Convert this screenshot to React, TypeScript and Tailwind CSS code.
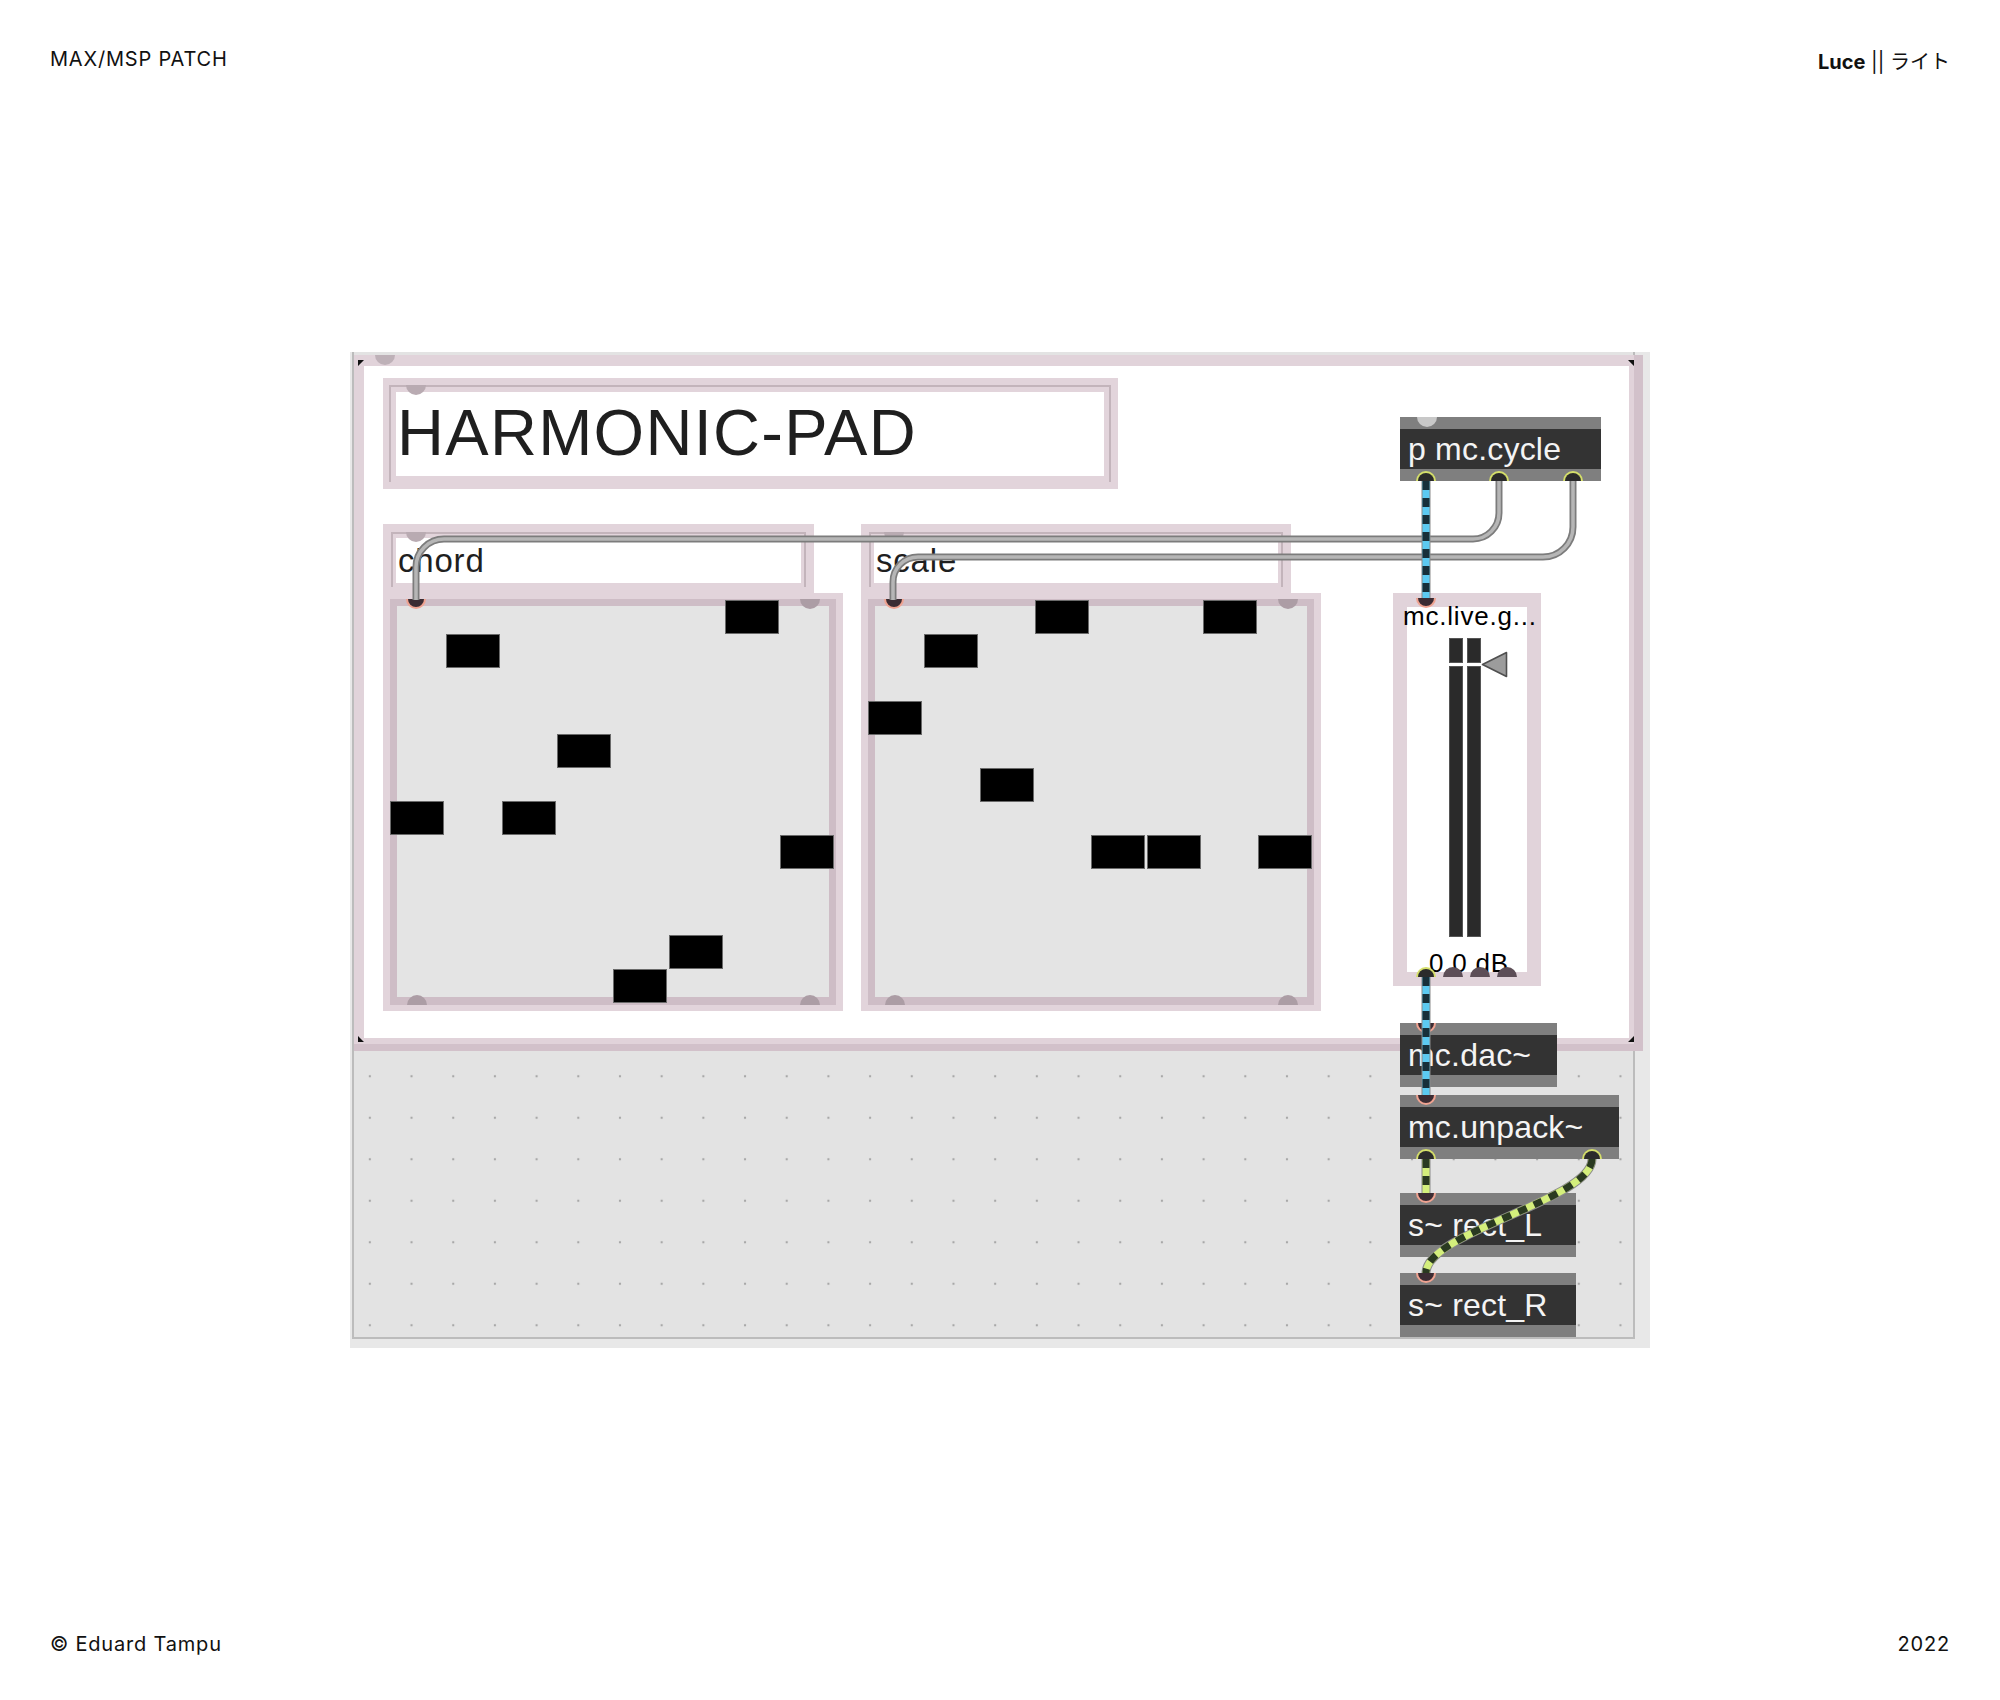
import type { CSSProperties } from "react";

type Side = "in" | "out";
type Tone = "hot" | "live" | "grey" | "mauve" | "dusk";

const SIDE: Record<Side, string> = {
  in: "top-0 rounded-b-full border-t-0",
  out: "bottom-0 rounded-t-full border-b-0",
};
const TONE: Record<Tone, string> = {
  hot: "border-2 border-[#f0a391] bg-[#3b2c33]",
  live: "border-2 border-[#d5df6a] bg-[#2b2b2b]",
  grey: "bg-[#c8c8c8]",
  mauve: "bg-[#ac9da5]",
  dusk: "bg-[#5d4e57]",
};

// inlet / outlet nub, sits over the edge of its object
function Port({ x, side, tone, style }: { x: number; side: Side; tone: Tone; style?: CSSProperties }) {
  return <span className={`absolute h-[10px] w-[20px] ${SIDE[side]} ${TONE[tone]}`} style={{ left: x - 10, ...style }} />;
}

// dark max object box: grey strip / body / grey strip
function Box({ pos, label, ins, outs }: { pos: string; label: string; ins: [number, Tone][]; outs: [number, Tone][] }) {
  return (
    <div className={`absolute flex h-[64px] flex-col ${pos}`}>
      <div className="h-[12px] bg-[#7f7f7f]" />
      <div className="flex h-[40px] items-center whitespace-nowrap bg-[#333333] pl-[8px] text-[32px] leading-none tracking-[0.2px] text-[#f4f4f4]">{label}</div>
      <div className="h-[12px] bg-[#7f7f7f]" />
      {ins.map(([x, t]) => <Port key={`i${x}`} x={x} side="in" tone={t} />)}
      {outs.map(([x, t]) => <Port key={`o${x}`} x={x} side="out" tone={t} />)}
    </div>
  );
}

// comment box with the pink selection frame
function Comment({ pos, label, size }: { pos: string; label: string; size: "big" | "small" }) {
  const big = size === "big";
  return (
    <div className={`absolute bg-[#e2d4db] ${pos} ${big ? "px-[7px] pb-[7px] pl-[6px] pt-[7px]" : "pb-[8px] pl-[8px] pr-[8px] pt-[8px]"}`}>
      <div className={`border-2 border-b-0 border-[#c3b4bb] ${big ? "px-[5px] pb-[6px] pt-[5px]" : "px-[3px] pb-[4px] pt-[4px]"}`}>
        <div className={`whitespace-nowrap bg-white leading-none ${big ? "h-[84px] pl-[1px] pt-[8px] text-[65px] tracking-[1.3px]" : "h-[45px] pl-[2px] pt-[6px] text-[33px]"}`}>
          {label}
        </div>
      </div>
      <span className={`absolute left-[23px] h-[10px] w-[20px] rounded-b-full bg-[#b9abb2] ${big ? "top-[7px]" : "top-[8px]"}`} />
    </div>
  );
}

function Matrix({ pos, cells }: { pos: string; cells: [number, number][] }) {
  return (
    <div className={`absolute h-[418px] w-[460px] bg-[#e2d4db] pl-[7px] pt-[6px] ${pos}`}>
      <div className="relative grid h-[406px] w-[446px] grid-cols-[repeat(8,55.75px)] grid-rows-[repeat(12,33.5px)] content-start bg-[#e4e4e4] pt-px shadow-[inset_0_0_0_7px_#cebdc6,inset_0_-8px_0_0_#cebdc6]">
        {cells.map(([c, r]) => (
          <div
            key={`${c}-${r}`}
            className="h-[34px] w-[54px] border border-[#6a6a6a] bg-black"
            style={{ gridColumnStart: c + 1, gridRowStart: r + 1 }}
          />
        ))}
        <Port x={26} side="in" tone="hot" />
        <Port x={420} side="in" tone="mauve" />
        <Port x={27} side="out" tone="mauve" />
        <Port x={420} side="out" tone="mauve" />
      </div>
    </div>
  );
}

function Cable({ d, kind }: { d: string; kind: "mc" | "sig" | "msg" }) {
  if (kind === "msg")
    return (
      <g fill="none">
        <path d={d} stroke="#7c7c7c" strokeWidth={7} />
        <path d={d} stroke="#b6b6b6" strokeWidth={3.5} />
      </g>
    );
  const hi = kind === "mc" ? "#5ccaf1" : "#d4ef7c";
  const lo = kind === "mc" ? "#17303a" : "#2a3a21";
  return (
    <g fill="none">
      <path d={d} stroke="#8a8a8a" strokeWidth={9} />
      <path d={d} stroke={hi} strokeWidth={7} />
      <path d={d} stroke={lo} strokeWidth={7} strokeDasharray="9 8" />
    </g>
  );
}

function Meter() {
  return (
    <div className="flex flex-col gap-[3px]">
      <div className="flex gap-[4px]">
        <div className="h-[25px] w-[14px] border border-[#555] bg-[#2a2a2a]" />
        <div className="h-[25px] w-[14px] border border-[#555] bg-[#2a2a2a]" />
      </div>
      <div className="flex gap-[4px]">
        <div className="h-[271px] w-[14px] border border-[#555] bg-[#2a2a2a]" />
        <div className="h-[271px] w-[14px] border border-[#555] bg-[#2a2a2a]" />
      </div>
    </div>
  );
}

function Gain() {
  return (
    <div className="absolute left-[1043px] top-[241px] h-[393px] w-[148px] bg-[#e1d3da] p-[14px]">
      <div className="flex h-[365px] flex-col bg-white text-[26px] leading-none text-black">
        <span className="-ml-[4px] -mt-[4px] whitespace-nowrap">mc.live.g...</span>
        <div className="mt-[9px] flex items-start pl-[42px]">
          <Meter />
          <svg className="mt-[12px]" width="28" height="30" viewBox="0 0 28 30">
            <path d="M1.5 14.5 L25.5 2.5 V26.5 Z" fill="#9c9c9c" stroke="#4f4f4f" strokeWidth="1.6" strokeLinejoin="round" />
          </svg>
        </div>
        <span className="mt-[13px] whitespace-nowrap pl-[22px]">0.0 dB</span>
      </div>
      <Port x={33} side="in" tone="hot" style={{ top: 5 }} />
      <Port x={33} side="out" tone="live" style={{ bottom: 9 }} />
      <Port x={60} side="out" tone="dusk" style={{ bottom: 9 }} />
      <Port x={87} side="out" tone="dusk" style={{ bottom: 9 }} />
      <Port x={114} side="out" tone="dusk" style={{ bottom: 9 }} />
    </div>
  );
}

function Patch() {
  return (
    <div className="relative h-[996px] w-[1300px] bg-[#e8e8e8] font-['Liberation_Sans',Arial,sans-serif] text-[#1f1f1f]">
      {/* patcher canvas with its dot grid */}
      <div className="absolute left-[2px] top-0 h-[987px] w-[1283px] border-2 border-t-0 border-[#bcbcbc] bg-[#e3e3e3] bg-[radial-gradient(circle,#a8a8a8_1px,transparent_1.6px)] bg-[length:41.7px_41.5px] bg-[position:-5px_-2px]" />

      {/* presentation panel */}
      <div className="absolute left-[4px] top-[3px] h-[696px] w-[1289px] bg-[#d2c1ca]">
        <div className="h-[689px] w-[1280px] bg-[#e1d3da] pb-[6px] pl-[10px] pr-[5px] pt-[11px]">
          <div className="h-[672px] w-[1265px] bg-white" />
        </div>
        <span className="absolute left-[21px] top-0 h-[10px] w-[20px] rounded-b-full bg-[#beb1b8]" />
      </div>

      <Comment pos="left-[33px] top-[26px] w-[735px]" label="HARMONIC-PAD" size="big" />
      <Comment pos="left-[33px] top-[172px] w-[431px]" label="chord" size="small" />
      <Comment pos="left-[511px] top-[172px] w-[430px]" label="scale" size="small" />

      <Matrix pos="left-[33px] top-[241px]" cells={[[6, 0], [1, 1], [3, 4], [0, 6], [2, 6], [7, 7], [5, 10], [4, 11]]} />
      <Matrix pos="left-[511px] top-[241px]" cells={[[3, 0], [6, 0], [1, 1], [0, 3], [2, 5], [4, 7], [5, 7], [7, 7]]} />

      <Box pos="left-[1050px] top-[65px] w-[201px]" label="p mc.cycle" ins={[[27, "grey"]]} outs={[[26, "live"], [99, "live"], [173, "live"]]} />
      <Gain />
      <Box pos="left-[1050px] top-[671px] w-[157px]" label="mc.dac~" ins={[[26, "hot"]]} outs={[]} />
      <Box pos="left-[1050px] top-[743px] w-[219px]" label="mc.unpack~" ins={[[26, "hot"]]} outs={[[26, "live"], [192, "live"]]} />
      <Box pos="left-[1050px] top-[841px] w-[176px]" label="s~ rect_L" ins={[[26, "hot"]]} outs={[]} />
      <Box pos="left-[1050px] top-[921px] w-[176px]" label="s~ rect_R" ins={[[26, "hot"]]} outs={[]} />

      {/* patch cords + frame corner marks */}
      <svg className="pointer-events-none absolute inset-0" width="1300" height="996" viewBox="0 0 1300 996">
        <path d="M8 8H14L8 14Z M8 684V690H14Z M1278 8H1284V14Z M1284 684V690H1278Z" fill="#111" />
        <Cable kind="msg" d="M1149 129 V161 A26 26 0 0 1 1123 187 H94 A28 28 0 0 0 66 215 V248" />
        <Cable kind="msg" d="M1223 129 V175 A30 30 0 0 1 1193 205 H568 A25 25 0 0 0 543 230 V248" />
        <Cable kind="mc" d="M1076 129 V246" />
        <Cable kind="mc" d="M1076 625 V743" />
        <Cable kind="sig" d="M1076 807 V841" />
        <Cable kind="sig" d="M1242 807 C1242 848 1076 880 1076 921" />
      </svg>
    </div>
  );
}

export default function App() {
  return (
    <div className="flex h-[1700px] w-[2000px] flex-col bg-white font-['Inter','Noto_Sans_CJK_JP',sans-serif] text-[20px] leading-none tracking-[0.04em] text-[#111]">
      <header className="flex h-[100px] items-start justify-between px-[50px] pt-[49px]">
        <span>MAX/MSP PATCH</span>
        <span className="pt-[3px] tracking-normal">
          <b className="font-bold">Luce</b> || ライト
        </span>
      </header>
      <main className="flex flex-1 items-center justify-center">
        <Patch />
      </main>
      <footer className="flex h-[100px] items-start justify-between px-[50px] pt-[34px]">
        <span>© Eduard Tampu</span>
        <span>2022</span>
      </footer>
    </div>
  );
}
